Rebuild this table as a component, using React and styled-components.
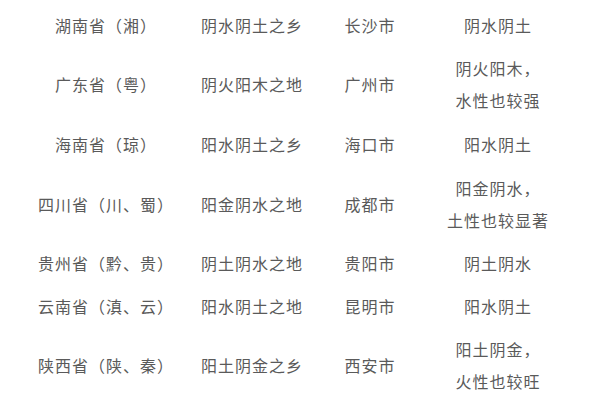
import React from 'react';
import styled, { createGlobalStyle } from 'styled-components';

const GlobalStyle = createGlobalStyle`
  html, body {
    margin: 0;
    padding: 0;
    background: #ffffff;
  }
  body {
    width: 600px;
    height: 400px;
    overflow: hidden;
    font-family: "Noto Sans CJK SC", "Noto Sans", sans-serif;
  }
`;

const Table = styled.div`
  display: grid;
  grid-template-columns: 146px 146px 90px 166px;
  padding: 2px 0 0 33px;
  color: #5a5a5a;
  font-size: 16px;
  letter-spacing: 1px;
`;

const Cell = styled.div`
  height: ${({ h }) => h}px;
  display: flex;
  flex-direction: column;
  align-items: center;
  justify-content: center;
  text-align: center;
  white-space: nowrap;
  line-height: 32px;
`;

const rows = [
  { h: 46, cells: ['湖南省（湘）', '阴水阴土之乡', '长沙市', ['阴水阴土']] },
  { h: 72, cells: ['广东省（粤）', '阴火阳木之地', '广州市', ['阴火阳木，', '水性也较强']] },
  { h: 48, cells: ['海南省（琼）', '阳水阴土之乡', '海口市', ['阳水阴土']] },
  { h: 72, cells: ['四川省（川、蜀）', '阳金阴水之地', '成都市', ['阳金阴水，', '土性也较显著']] },
  { h: 46, cells: ['贵州省（黔、贵）', '阴土阴水之地', '贵阳市', ['阴土阴水']] },
  { h: 40, cells: ['云南省（滇、云）', '阳水阴土之地', '昆明市', ['阳水阴土']] },
  { h: 78, cells: ['陕西省（陕、秦）', '阳土阴金之乡', '西安市', ['阳土阴金，', '火性也较旺']] },
];

export default function App() {
  return (
    <>
      <GlobalStyle />
      <Table>
        {rows.map((row, i) => (
          <React.Fragment key={i}>
            <Cell h={row.h}>{row.cells[0]}</Cell>
            <Cell h={row.h}>{row.cells[1]}</Cell>
            <Cell h={row.h}>{row.cells[2]}</Cell>
            <Cell h={row.h}>
              {row.cells[3].map((line, j) => (
                <span key={j}>{line}</span>
              ))}
            </Cell>
          </React.Fragment>
        ))}
      </Table>
    </>
  );
}
